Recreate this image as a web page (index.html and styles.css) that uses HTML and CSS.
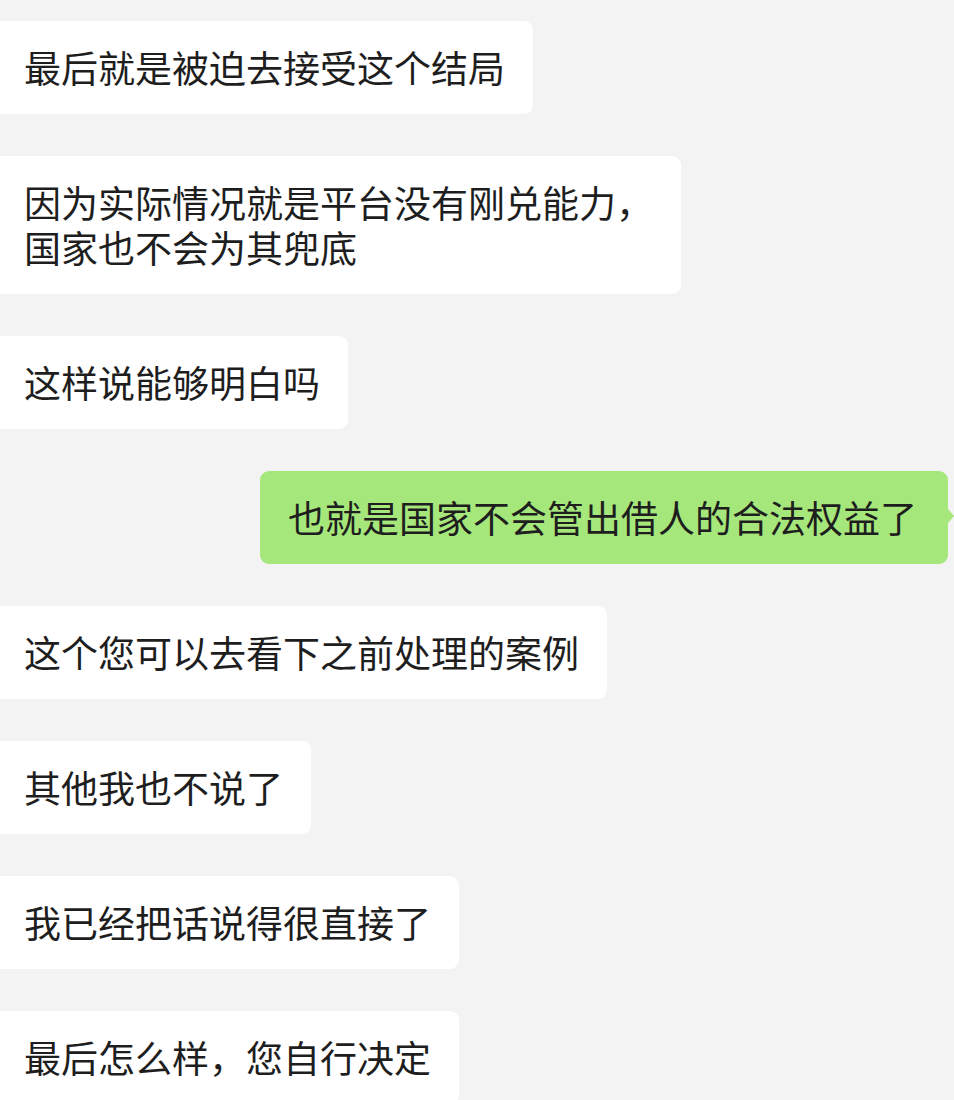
FILE: index.html
```html
<!DOCTYPE html>
<html lang="zh-CN">
<head>
  <meta charset="UTF-8" />
  <meta name="viewport" content="width=device-width, initial-scale=1" />
  <title>聊天记录</title>
  <link rel="stylesheet" href="styles.css">
</head>
<body>
  <div class="chat">
    <div class="msg">
      <div class="bubble">最后就是被迫去接受这个结局</div>
    </div>
    <div class="msg">
      <div class="bubble">因为实际情况就是平台没有刚兑能力，<br>国家也不会为其兜底</div>
    </div>
    <div class="msg">
      <div class="bubble">这样说能够明白吗</div>
    </div>
    <div class="msg mine">
      <div class="bubble">也就是国家不会管出借人的合法权益了</div>
    </div>
    <div class="msg">
      <div class="bubble">这个您可以去看下之前处理的案例</div>
    </div>
    <div class="msg">
      <div class="bubble">其他我也不说了</div>
    </div>
    <div class="msg">
      <div class="bubble">我已经把话说得很直接了</div>
    </div>
    <div class="msg">
      <div class="bubble">最后怎么样，您自行决定</div>
    </div>
  </div>
</body>
</html>
```

FILE: styles.css
```css
body {
  margin: 0;
  background: #f3f3f3;
  color: #1e1e1e;
  font-family: "Noto Sans CJK SC", "Microsoft YaHei", sans-serif;
}
.chat {
  display: flex;
  flex-direction: column;
  gap: 42px;
  padding-top: 21px;
}
.msg {
  display: flex;
  justify-content: flex-start;
}
.bubble {
  background: #ffffff;
  font-size: 37px;
  line-height: 45px;
  padding: 24px 28px 24px 24px;
  border-radius: 0 9px 9px 0;
  white-space: nowrap;
  position: relative;
}
/* 自分の発言は右寄せ・緑 */
.msg.mine {
  justify-content: flex-end;
  padding-right: 6px;
}
.msg.mine .bubble {
  background: #a6e77b;
  padding: 24px 31px 24px 28px;
  border-radius: 9px;
}
.msg.mine .bubble::after {
  content: "";
  position: absolute;
  right: -6px;
  top: 38px;
  border-top: 7px solid transparent;
  border-bottom: 7px solid transparent;
  border-left: 6px solid #a6e77b;
}
```
